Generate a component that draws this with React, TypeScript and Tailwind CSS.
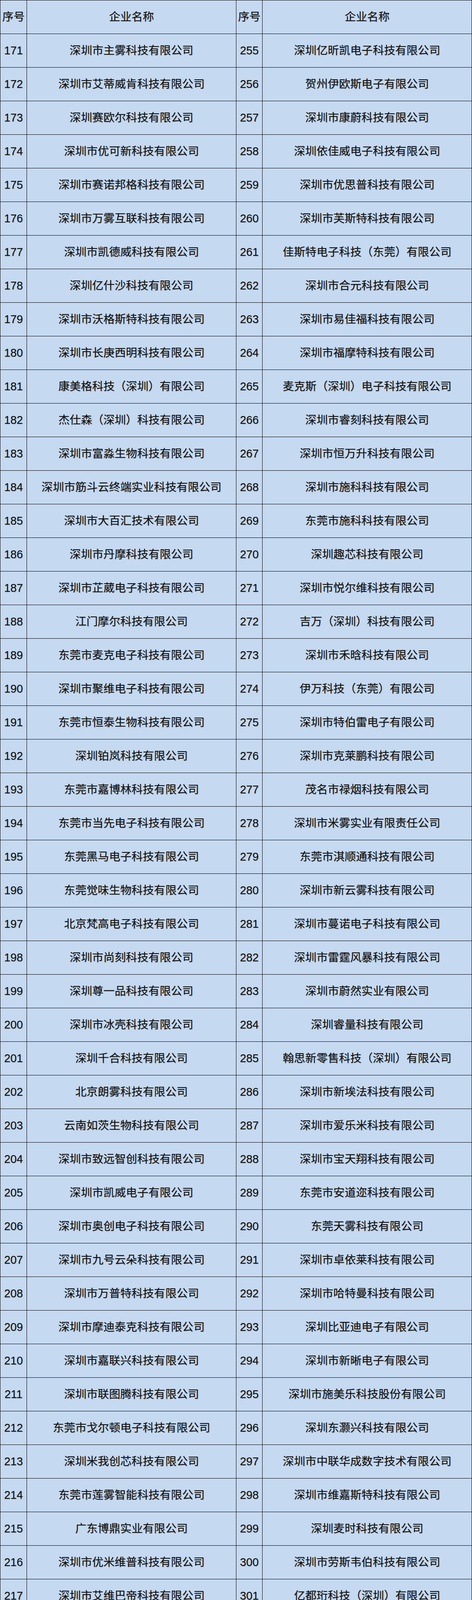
const leftNames = [
  "深圳市主雾科技有限公司",
  "深圳市艾蒂威肯科技有限公司",
  "深圳赛欧尔科技有限公司",
  "深圳市优可新科技有限公司",
  "深圳市赛诺邦格科技有限公司",
  "深圳市万雾互联科技有限公司",
  "深圳市凯德威科技有限公司",
  "深圳亿什沙科技有限公司",
  "深圳市沃格斯特科技有限公司",
  "深圳市长庚西明科技有限公司",
  "康美格科技（深圳）有限公司",
  "杰仕森（深圳）科技有限公司",
  "深圳市富淼生物科技有限公司",
  "深圳市筋斗云终端实业科技有限公司",
  "深圳市大百汇技术有限公司",
  "深圳市丹摩科技有限公司",
  "深圳市芷葳电子科技有限公司",
  "江门摩尔科技有限公司",
  "东莞市麦克电子科技有限公司",
  "深圳市聚维电子科技有限公司",
  "东莞市恒泰生物科技有限公司",
  "深圳铂岚科技有限公司",
  "东莞市嘉博林科技有限公司",
  "东莞市当先电子科技有限公司",
  "东莞黑马电子科技有限公司",
  "东莞觉味生物科技有限公司",
  "北京梵高电子科技有限公司",
  "深圳市尚刻科技有限公司",
  "深圳尊一品科技有限公司",
  "深圳市冰壳科技有限公司",
  "深圳千合科技有限公司",
  "北京朗雾科技有限公司",
  "云南如茨生物科技有限公司",
  "深圳市致远智创科技有限公司",
  "深圳市凯威电子有限公司",
  "深圳市奥创电子科技有限公司",
  "深圳市九号云朵科技有限公司",
  "深圳市万普特科技有限公司",
  "深圳市摩迪泰克科技有限公司",
  "深圳市嘉联兴科技有限公司",
  "深圳市联图腾科技有限公司",
  "东莞市戈尔顿电子科技有限公司",
  "深圳米我创芯科技有限公司",
  "东莞市莲雾智能科技有限公司",
  "广东博鼎实业有限公司",
  "深圳市优米维普科技有限公司",
  "深圳市艾维巴帝科技有限公司",
  "深圳市悦之途贸易有限公司",
  "深圳市泰康瑞科技有限公司",
  "深圳健敦科技有限公司",
  "东莞市安云科技有限公司",
  "深圳市贝芬科技有限公司",
  "深圳达芬奇实业发展有限公司",
  "深圳市派优电子有限公司",
  "深圳市美深威科技有限公司",
  "深圳市雾客科技有限公司",
  "深圳威飞特科技有限公司",
  "深圳市鑫亿美科技有限公司",
  "深圳市乐瑞达科技有限公司",
  "深圳维普思科技有限公司",
  "深圳宇之坤科技有限公司",
  "深圳市艾卓尔科技有限公司",
  "深圳市维普佳科技有限公司",
  "深圳市布鲁托科技有限公司",
  "深圳市万瓴科技有限公司",
  "深圳市域吏科技有限公司",
  "酷玩时代（深圳）科技有限公司",
  "深圳葭南科技有限公司",
  "广东华晨康科技集团有限公司",
  "东莞市思迪电子有限公司",
  "深圳市明迎电子科技有限公司",
  "深圳市茂安达科技有限公司",
  "深圳市莱米诺科技有限公司",
  "深圳市德远电子工业有限公司",
  "深圳哈卡科技有限公司",
  "深圳市同佳投资发展有限公司",
  "深圳市伦邦科技有限公司",
  "深圳市星贝点科技有限公司",
  "深圳市英霏特科技有限公司",
  "深圳市派昇科技有限公司",
  "澎湃云科技（深圳）有限公司",
  "深圳市中天辰讯科技有限公司",
  "深圳市爱星旺电子科技有限公司",
  "深圳市世纪铭扬科技有限公司",
];

const rightNames = [
  "深圳亿昕凯电子科技有限公司",
  "贺州伊欧斯电子有限公司",
  "深圳市康蔚科技有限公司",
  "深圳依佳威电子科技有限公司",
  "深圳市优思普科技有限公司",
  "深圳市芙斯特科技有限公司",
  "佳斯特电子科技（东莞）有限公司",
  "深圳市合元科技有限公司",
  "深圳市易佳福科技有限公司",
  "深圳市福摩特科技有限公司",
  "麦克斯（深圳）电子科技有限公司",
  "深圳市睿刻科技有限公司",
  "深圳市恒万升科技有限公司",
  "深圳市施科科技有限公司",
  "东莞市施科科技有限公司",
  "深圳趣芯科技有限公司",
  "深圳市悦尔维科技有限公司",
  "吉万（深圳）科技有限公司",
  "深圳市禾晗科技有限公司",
  "伊万科技（东莞）有限公司",
  "深圳市特伯雷电子有限公司",
  "深圳市克莱鹏科技有限公司",
  "茂名市禄烟科技有限公司",
  "深圳市米雾实业有限责任公司",
  "东莞市淇顺通科技有限公司",
  "深圳市新云雾科技有限公司",
  "深圳市蔓诺电子科技有限公司",
  "深圳市雷霆风暴科技有限公司",
  "深圳市蔚然实业有限公司",
  "深圳睿量科技有限公司",
  "翰思新零售科技（深圳）有限公司",
  "深圳市新埃法科技有限公司",
  "深圳市爱乐米科技有限公司",
  "深圳市宝天翔科技有限公司",
  "东莞市安道迩科技有限公司",
  "东莞天雾科技有限公司",
  "深圳市卓依莱科技有限公司",
  "深圳市哈特曼科技有限公司",
  "深圳比亚迪电子有限公司",
  "深圳市新晰电子有限公司",
  "深圳市施美乐科技股份有限公司",
  "深圳东灏兴科技有限公司",
  "深圳市中联华成数字技术有限公司",
  "深圳市维嘉斯特科技有限公司",
  "深圳麦时科技有限公司",
  "深圳市劳斯韦伯科技有限公司",
  "亿都珩科技（深圳）有限公司",
  "深圳市福瑞顿科技有限公司",
  "深圳市康唯普科技有限公司",
  "深圳市耐星科技有限公司",
  "深圳市康尔科技有限公司",
  "深圳市艾威普科技有限公司",
  "深圳市绿烟科技有限公司",
  "深圳市海仕格科技有限公司",
  "东莞市艾尚美智能制造有限公司",
  "深圳市美园科技有限公司",
  "东莞市万思达科技有限公司",
  "深圳市凯乐文科技有限公司",
  "东莞市特科迪科技有限公司",
  "深圳市威玛斯科技有限公司",
  "深圳市驭雾电子有限公司",
  "东莞市工炎电子科技有限公司",
  "广东头等窗电子科技有限公司",
  "东莞市阿尔法电子科技有限公司",
  "深圳市择旺科技有限公司",
  "深圳市华洲海盛科技有限公司",
  "深圳市傲斯唯博科技有限公司",
  "深圳市大道四九科技有限公司",
  "深圳市杰仕博科技有限公司",
  "深圳市新宠科技有限公司",
  "深圳雾青云科技有限公司",
  "深圳市斯科尔科技股份有限公司",
  "陕西港华生物科技有限公司",
  "深圳市思美悦科技有限公司",
  "深圳市火焰高科技有限公司",
  "深圳市豫孚源科技有限公司",
  "深圳烟巴克科技有限公司",
  "深圳市酷索尼克科技有限公司",
  "深圳市梦天蓝科技有限公司",
  "深圳市威普士科技有限公司",
  "深圳拉娜科技有限公司",
  "深圳市恒士健科技有限公司",
  "青岛海大新星科技有限公司",
  "深圳市好这口电子科技有限公司",
];

const rows = leftNames.map((name, i) => ({
  leftNo: 171 + i,
  leftName: name,
  rightNo: 255 + i,
  rightName: rightNames[i],
}));

function Cell({ children }: { children: React.ReactNode }) {
  return (
    <div className="flex h-[86px] items-center justify-center whitespace-nowrap border-b border-r border-black">
      {children}
    </div>
  );
}

export default function App() {
  return (
    <div
      className="grid w-[1208px] grid-cols-[68px_536px_67px_536px] border-l border-t border-black bg-[#c5d9f1] text-[28.8px] leading-none text-[#111] [text-shadow:1px_1px_1px_rgba(0,0,0,0.3)]"
      style={{ fontFamily: '"Liberation Sans", "Noto Sans CJK SC", sans-serif' }}
    >
      <Cell>序号</Cell>
      <Cell>企业名称</Cell>
      <Cell>序号</Cell>
      <Cell>企业名称</Cell>

      {rows.map((row) => (
        <div key={row.leftNo} className="contents">
          <Cell>{row.leftNo}</Cell>
          <Cell>{row.leftName}</Cell>
          <Cell>{row.rightNo}</Cell>
          <Cell>{row.rightName}</Cell>
        </div>
      ))}
    </div>
  );
}
